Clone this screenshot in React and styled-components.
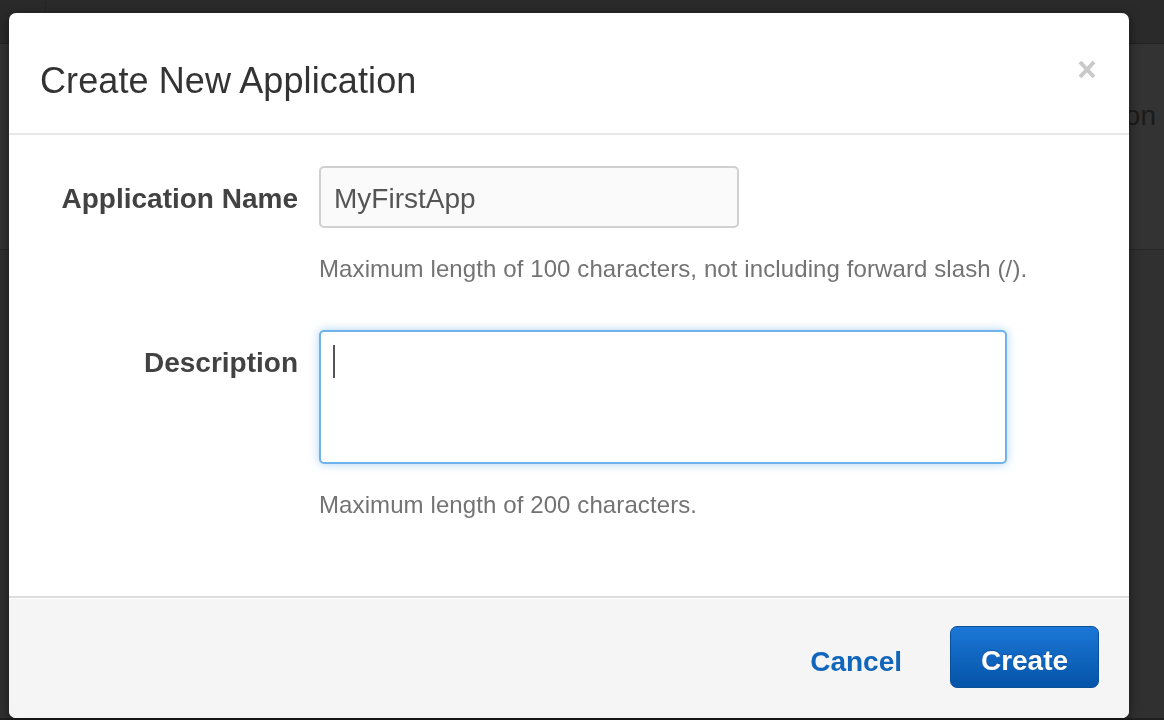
import React from "react";
import styled, { createGlobalStyle } from "styled-components";

const colors = {
  backdrop: "#323232",
  title: "#333333",
  label: "#424242",
  help: "#737373",
  inputText: "#555555",
  link: "#1166bb",
  footer: "#f5f5f5",
};

const font = `"Liberation Sans", Arial, Helvetica, sans-serif`;

const GlobalStyle = createGlobalStyle`
  html, body {
    margin: 0;
    padding: 0;
    height: 100%;
    background: ${colors.backdrop};
    font-family: ${font};
    overflow: hidden;
  }
  * { box-sizing: border-box; }
`;

const CloseIcon = () => (
  <svg width="18" height="19" viewBox="0 0 18 19">
    <path d="M2 2 L16 17 M16 2 L2 17" stroke="#c9c9c9" strokeWidth="4" fill="none" />
  </svg>
);

const App = () => {
  return (
    <>
      <GlobalStyle />
      <Page>
        <TopBar>
          <TopCell />
        </TopBar>
        <PageHeader>
          <PageHeading>Create New Application</PageHeading>
        </PageHeader>
        <PageMain />
        <PageFoot />
      </Page>

      <Modal>
        <ModalHeader>
          <ModalTitle>Create New Application</ModalTitle>
          <CloseButton aria-label="Close">
            <CloseIcon />
          </CloseButton>
        </ModalHeader>

        <ModalBody>
          <FormGroup>
            <Label>Application Name</Label>
            <Field>
              <TextInput defaultValue="MyFirstApp" readOnly />
              <HelpText>
                Maximum length of 100 characters, not including forward slash (/).
              </HelpText>
            </Field>
          </FormGroup>

          <FormGroup>
            <Label>Description</Label>
            <Field>
              <TextArea>
                <Caret />
              </TextArea>
              <HelpText>Maximum length of 200 characters.</HelpText>
            </Field>
          </FormGroup>
        </ModalBody>

        <ModalFooter>
          <LinkButton>Cancel</LinkButton>
          <PrimaryButton>Create</PrimaryButton>
        </ModalFooter>
      </Modal>
    </>
  );
};

export default App;

const Page = styled.div`
  display: flex;
  flex-direction: column;
  height: 720px;
  width: 1164px;
`;

const TopBar = styled.div`
  display: flex;
  height: 44px;
  background: #2a2a2a;
  border-bottom: 1px solid #222;
`;

const TopCell = styled.div`
  width: 46px;
  border-right: 1px solid #242424;
`;

const PageHeader = styled.div`
  display: flex;
  justify-content: flex-end;
  height: 206px;
  padding: 56px 8px 0 0;
  background: #333333;
  border-bottom: 1px solid #282828;
`;

const PageHeading = styled.h1`
  margin: 0;
  font-size: 28px;
  line-height: 32px;
  font-weight: 400;
  color: #1b1b1b;
`;

const PageMain = styled.div`
  flex: 1;
  background: #303030;
`;

const PageFoot = styled.div`
  height: 2px;
  background: #1d201d;
`;

const Modal = styled.div`
  position: fixed;
  top: 13px;
  left: 9px;
  width: 1120px;
  height: 705px;
  display: flex;
  flex-direction: column;
  background: #fff;
  border-radius: 7px;
  overflow: hidden;
  box-shadow: 0 3px 12px rgba(0, 0, 0, 0.5);
`;

const ModalHeader = styled.div`
  display: flex;
  justify-content: space-between;
  align-items: flex-start;
  padding: 48px 33px 32px 31px;
  border-bottom: 2px solid #e8e8e8;
`;

const ModalTitle = styled.h4`
  margin: 0;
  font-size: 36px;
  line-height: 40px;
  font-weight: 400;
  letter-spacing: 0.1px;
  color: ${colors.title};
`;

const CloseButton = styled.button`
  display: flex;
  margin-top: -1px;
  padding: 0;
  border: 0;
  background: none;
  cursor: pointer;
`;

const ModalBody = styled.div`
  flex: 1;
  display: flex;
  flex-direction: column;
  gap: 47px;
  padding: 31px 30px 0 31px;
`;

const FormGroup = styled.div`
  display: grid;
  grid-template-columns: 258px 1fr;
  column-gap: 21px;
  align-items: start;
`;

const Label = styled.label`
  padding-top: 17px;
  text-align: right;
  font-size: 28px;
  line-height: 32px;
  font-weight: 700;
  color: ${colors.label};
`;

const Field = styled.div`
  display: flex;
  flex-direction: column;
  align-items: flex-start;
`;

const TextInput = styled.input`
  width: 420px;
  height: 62px;
  padding: 4px 13px 0;
  border: 2px solid #d0d0d0;
  border-radius: 5px;
  background: #fafafa;
  font-family: ${font};
  font-size: 28px;
  color: ${colors.inputText};
  outline: none;
`;

const TextArea = styled.div`
  width: 688px;
  height: 134px;
  padding: 13px 12px;
  border: 2px solid #6eb3ec;
  border-radius: 5px;
  background: #fff;
  box-shadow: 0 0 10px rgba(102, 175, 233, 0.55);
`;

const Caret = styled.span`
  display: block;
  width: 2px;
  height: 33px;
  background: #555;
`;

const HelpText = styled.p`
  margin: 27px 0 0;
  font-size: 24px;
  line-height: 28px;
  letter-spacing: 0.1px;
  color: ${colors.help};
`;

const ModalFooter = styled.div`
  display: flex;
  justify-content: flex-end;
  align-items: center;
  height: 122px;
  padding: 0 30px 3px 0;
  gap: 48px;
  background: ${colors.footer};
  border-top: 2px solid #dcdcdc;
  box-shadow: inset 0 1px 0 #fff;
`;

const LinkButton = styled.button`
  padding: 10px 0 0;
  border: 0;
  background: none;
  font-family: ${font};
  font-size: 28px;
  font-weight: 700;
  color: ${colors.link};
  cursor: pointer;
`;

const PrimaryButton = styled.button`
  width: 149px;
  height: 62px;
  padding: 8px 0 0;
  border: 1px solid #0a4f9a;
  border-radius: 7px;
  background: linear-gradient(to bottom, #1b77d6, #0454a8);
  font-family: ${font};
  font-size: 28px;
  font-weight: 700;
  color: #fff;
  text-shadow: 0 -1px 0 rgba(0, 0, 0, 0.2);
  cursor: pointer;
`;
